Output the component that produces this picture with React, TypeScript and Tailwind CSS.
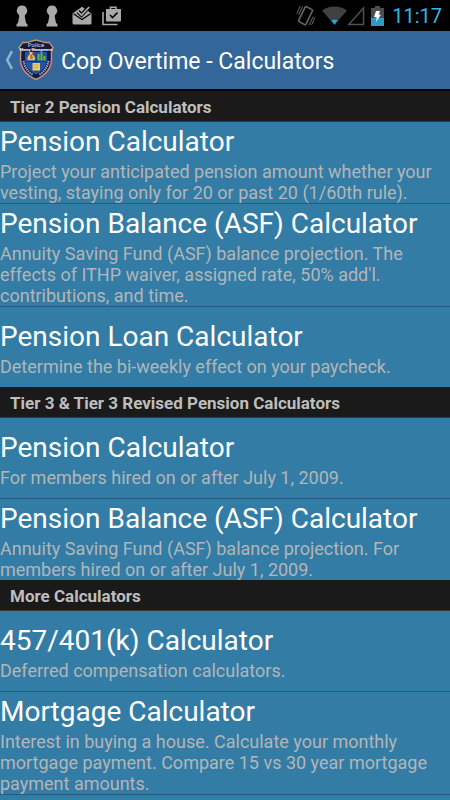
interface Calculator {
  title: string
  description: string
}

interface Section {
  name: string
  calculators: Calculator[]
}

const sections: Section[] = [
  {
    name: 'Tier 2 Pension Calculators',
    calculators: [
      {
        title: 'Pension Calculator',
        description:
          'Project your anticipated pension amount whether your vesting, staying only for 20 or past 20 (1/60th rule).',
      },
      {
        title: 'Pension Balance (ASF) Calculator',
        description:
          "Annuity Saving Fund (ASF) balance projection. The effects of ITHP waiver, assigned rate, 50% add'l. contributions, and time.",
      },
      {
        title: 'Pension Loan Calculator',
        description: 'Determine the bi-weekly effect on your paycheck.',
      },
    ],
  },
  {
    name: 'Tier 3 & Tier 3 Revised Pension Calculators',
    calculators: [
      {
        title: 'Pension Calculator',
        description: 'For members hired on or after July 1, 2009.',
      },
      {
        title: 'Pension Balance (ASF) Calculator',
        description:
          'Annuity Saving Fund (ASF) balance projection. For members hired on or after July 1, 2009.',
      },
    ],
  },
  {
    name: 'More Calculators',
    calculators: [
      {
        title: '457/401(k) Calculator',
        description: 'Deferred compensation calculators.',
      },
      {
        title: 'Mortgage Calculator',
        description:
          'Interest in buying a house. Calculate your monthly mortgage payment. Compare 15 vs 30 year mortgage payment amounts.',
      },
    ],
  },
]

const KeyholeIcon = () => (
  <svg className="h-[22px] w-3" viewBox="0 0 12 22" fill="#a9a9a9" aria-hidden="true">
    <path d="M6 .5a5.200 5.200 0 0 1 3.300 9.200l-.6 1.300 1.300 7 1.500 1.300v2.200H.5v-2.200L2 18l1.300-7-.6-1.300A5.200 5.200 0 0 1 6 .5z" />
  </svg>
)

const InboxIcon = () => (
  <svg className="h-5 w-5" viewBox="0 0 20 20" aria-hidden="true">
    <path fill="#a9a9a9" d="M.5 7.500 10 .8l9.500 6.700V17a1.500 1.500 0 0 1-1.500 1.500H2A1.500 1.500 0 0 1 .5 17z" />
    <path fill="none" stroke="#000" strokeWidth="1.300" d="m1.500 7.800 8.500 5.700 8.500-5.700" />
    <path fill="none" stroke="#000" strokeWidth="4" d="m6 5.500 3.500 3.500 7.500-8" />
    <path fill="none" stroke="#a9a9a9" strokeWidth="1.800" d="m5.500 5.200 4 4L17.200 1" />
  </svg>
)

const ShopIcon = () => (
  <svg className="h-5 w-5" viewBox="0 0 20 20" aria-hidden="true">
    <path fill="none" stroke="#a9a9a9" strokeWidth="1.600" d="M1 6v12.500h14.500M8.500 3.500V1.200h5.500v2.300" />
    <path fill="#a9a9a9" d="M4 3h15v11.500a1 1 0 0 1-1 1H5a1 1 0 0 1-1-1z" />
    <path fill="none" stroke="#000" strokeWidth="1.600" d="m8 9 2.500 2.600 5-5" />
  </svg>
)

const VibrateIcon = () => (
  <svg className="h-[22px] w-5" viewBox="0 0 20 22" fill="none" stroke="#686868" aria-hidden="true">
    <path strokeWidth="1.600" strokeLinejoin="round" d="m10.500 1.800 5.500 2.800a1 1 0 0 1 .4 1.400L10 19.200a1 1 0 0 1-1.400.4l-5.400-3a1 1 0 0 1-.4-1.400L9.100 2.200a1 1 0 0 1 1.400-.4z" />
    <path d="M4.300 1 .9 8.500M6.500 1.500 2.600 10M17.200 11.500l-4 8.500M19 12.500l-3.500 7.500" />
  </svg>
)

const WifiIcon = () => (
  <svg className="h-[19px] w-[25px]" viewBox="0 0 25 19" aria-hidden="true">
    <path fill="#414141" d="M0 4.500C7-1 18-1 25 4.500L12.500 19z" />
    <path fill="#33a0c8" stroke="#111" strokeWidth=".5" d="M8.700 14.200c2.200-1.600 5.400-1.600 7.600 0L12.500 19z" />
  </svg>
)

const SignalIcon = () => (
  <svg className="h-5 w-[18px]" viewBox="0 0 18 20" fill="none" stroke="#505050" strokeWidth="1.500" aria-hidden="true">
    <path d="M16.500 2v16.500H1.800z" />
  </svg>
)

const BatteryIcon = () => (
  <svg className="h-5 w-[13px]" viewBox="0 0 13 20" aria-hidden="true">
    <path fill="#4d4d4d" d="M4 0h5v2h4v10H0V2h4z" />
    <path fill="#3399c4" d="M0 12h13v8H0z" />
    <path fill="#fff" d="M5 5h4L7.800 8.500l2.200.3L5 16l.8-4.500L3 11z" />
  </svg>
)

const BackIcon = () => (
  <svg className="h-5 w-2" viewBox="0 0 8 20" fill="none" stroke="#8fb3d2" strokeWidth="2.500" aria-hidden="true">
    <path d="M7 1.200 2.200 10 7 18.800" />
  </svg>
)

const BadgeLogo = () => (
  <svg className="h-[42px] w-[38px]" viewBox="0 0 38 42" aria-hidden="true">
    <defs>
      <radialGradient id="glow">
        <stop offset="0.700" stopColor="#7048bc" />
        <stop offset="0.850" stopColor="#6553b4" stopOpacity=".8" />
        <stop offset="1" stopColor="#336699" stopOpacity="0" />
      </radialGradient>
    </defs>
    <circle cx="19" cy="22.500" r="19" fill="url(#glow)" />
    <path
      d="M6 3.200Q9.500 4 13 2.600L19 1l6 1.600Q28.500 4 32 3.200L36 8.500Q34 12 34.500 18C35 29 29 36 19 40.500 9 36 3 29 3.500 18 4 12 4 11 2 8.500z"
      fill="#111c46"
      stroke="#c6966a"
      strokeWidth="1.400"
    />
    <path d="M8 13h22v8c0 6-4 11-11 14.500C12 32 8 27 8 21z" fill="#2355a4" />
    <path d="M9 22.500h20M19 13v20" stroke="#183b78" />
    <path d="M12.500 13h3.500l-1 2c4 3 3.500 5.500 2.500 6.200h-6.500c-1-1.200-1-3.700 2-6.200z" fill="#efbd58" />
    <path d="M14.300 15.500v4.500M15.500 16.500h-2v1.400h2v1.500h-2.300" fill="none" stroke="#906226" strokeWidth=".7" />
    <path d="M20.500 21.500V15h2v6.500zM23.500 21.500v-8h2v8zM26.500 21.500V17h2v4.500z" fill="#6cb43f" />
    <path d="M15.500 24h7.500v7.500h-7.500z" fill="#f2cb67" />
    <path d="M16.500 26h5M16.500 28.500h5" stroke="#c39440" strokeWidth=".7" />
    <path d="M6.500 22q1.500 9 9 13.500M31.500 22q-1.500 9-9 13.500" fill="none" stroke="#acbcdf" strokeWidth="2" strokeDasharray="1.300 .9" />
    <text x="19" y="7.500" fill="#d7dcf2" fontSize="6" textAnchor="middle">
      Police
    </text>
    <text x="19" y="11.500" fill="#fff" fontSize="3.500" fontWeight="700" textAnchor="middle">
      Money Management
    </text>
  </svg>
)

const StatusBar = () => (
  <div className="flex h-[31px] items-center justify-between bg-black pr-2 pl-4">
    <div className="flex items-center">
      <KeyholeIcon />
      <div className="ml-[18px] flex items-center gap-3">
        <KeyholeIcon />
        <div className="ml-0.5 flex items-center gap-[10px]">
          <InboxIcon />
          <ShopIcon />
        </div>
      </div>
    </div>
    <div className="flex items-center">
      <VibrateIcon />
      <div className="ml-1.5 flex items-center">
        <WifiIcon />
        <SignalIcon />
      </div>
      <div className="ml-1.5 flex items-center gap-2">
        <BatteryIcon />
        <p className="text-xl leading-7 text-[#33b5e5]">11:17</p>
      </div>
    </div>
  </div>
)

const ActionBar = () => (
  <header className="flex h-[60px] items-center border-b-2 border-black bg-[#336699] pl-[5px]">
    <button type="button" aria-label="Navigate up" className="flex items-center gap-1">
      <BackIcon />
      <BadgeLogo />
    </button>
    <h1 className="ml-1.5 pt-1 text-[23px] leading-8 text-white">Cop Overtime - Calculators</h1>
  </header>
)

const CalculatorRow = ({ title, description }: Calculator) => (
  <li className="border-b border-[#285a79] last:border-b-0">
    <a href="#" className="flex min-h-20 flex-col justify-center">
      <h3 className="text-[28px] leading-[39px] text-white">{title}</h3>
      <p className="text-lg leading-[21px] text-[#b3b6b8]">{description}</p>
    </a>
  </li>
)

export default function App() {
  return (
    <div className="min-h-screen bg-[#337ca5] font-[Roboto,sans-serif]">
      <StatusBar />
      <ActionBar />
      <main>
        {sections.map((section) => (
          <section key={section.name}>
            <h2 className="h-[31px] border-b border-[#383838] bg-[#1a1a1a] pl-2.5 text-[17px] leading-8 font-bold text-[#bebebe]">
              {section.name}
            </h2>
            <ul>
              {section.calculators.map((calculator) => (
                <CalculatorRow key={calculator.title} {...calculator} />
              ))}
            </ul>
          </section>
        ))}
        <div className="border-t border-[#285a79]" />
      </main>
    </div>
  )
}
